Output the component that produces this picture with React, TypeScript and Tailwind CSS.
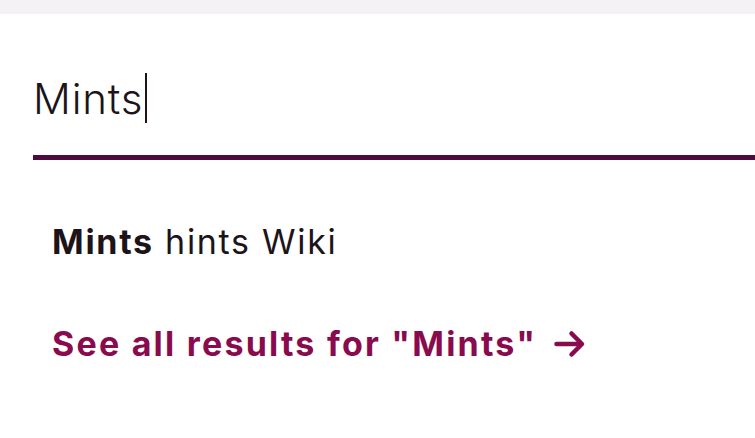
import { useState } from "react";

function App() {
  const [query] = useState("Mints");

  return (
    <div className="min-h-screen bg-white" style={{ fontFamily: "Inter, 'Noto Sans', sans-serif" }}>
      <div className="h-[14px] bg-[#f4f2f5]" />
      <div className="pl-[33px]">
        <div className="border-b-[5px] border-[#4e0b40] pt-[56px] pb-[29px]">
          <div className="flex h-[56px] items-center text-[42px] font-light tracking-[0.02em] text-[#1c1419]">
            <span>{query}</span>
            <span className="ml-[2px] h-[50px] w-[2px] bg-[#1c1419]" />
          </div>
        </div>
        <div className="pl-[19px] pt-[60px]">
          <p className="text-[34px] leading-[44px] tracking-[0.05em] text-[#1c1419]">
            <span className="font-bold">Mints</span> hints Wiki
          </p>
          <a href="#" className="mt-[58px] flex items-center gap-[15px] text-[34px] font-bold leading-[44px] tracking-[0.065em] text-[#8a0a4e]">
            See all results for "Mints"
            <svg width="36" height="36" viewBox="0 0 24 24" fill="none" stroke="currentColor" strokeWidth="3" strokeLinecap="round" strokeLinejoin="round">
              <path d="M3 12h16" />
              <path d="M13 5l7 7-7 7" />
            </svg>
          </a>
        </div>
      </div>
    </div>
  );
}

export default App;
